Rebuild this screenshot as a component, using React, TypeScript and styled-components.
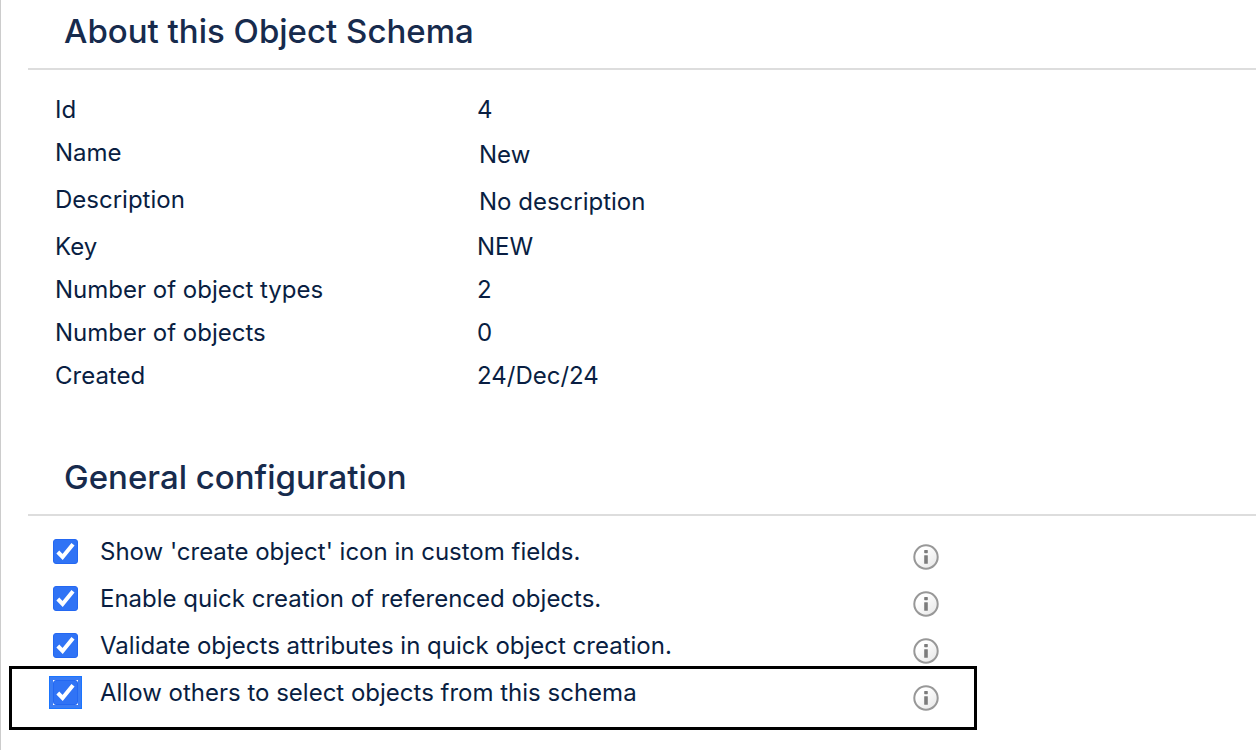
import React from "react";
import styled, { createGlobalStyle } from "styled-components";

const GlobalStyle = createGlobalStyle`
  * { box-sizing: border-box; }
  body {
    margin: 0;
    background: #fff;
    color: #091e42;
    font-family: Inter, "Liberation Sans", sans-serif;
    font-size: 24px;
    font-optical-sizing: none;
    line-height: 29px;
  }
`;

const Page = styled.main`
  min-height: 100vh;
  padding-left: 27px;
  border-left: 1px solid #ccc;
  overflow: hidden;
`;

const Section = styled.section`
  & + & { margin-top: 49px; }
`;

const Heading = styled.h2`
  margin: 0;
  padding: 10px 36px 16px;
  border-bottom: 2px solid #ddd;
  color: #172b4d;
  font-size: 33px;
  font-weight: 500;
  line-height: 42px;
`;

const Details = styled.table`
  margin: 18px 27px 0;
  border-collapse: separate;
  border-spacing: 0;
  text-align: left;
`;

const Term = styled.th`
  width: 422px;
  padding: 7px 0;
  font-weight: 400;
  vertical-align: top;
`;

const Value = styled.td<{ $editable?: boolean }>`
  padding: 7px 0;
  border: ${(p) => (p.$editable ? 2 : 0)}px solid transparent;
  vertical-align: top;
`;

const Options = styled.ul`
  margin: 0;
  padding: 12px 25px 0;
  list-style: none;
`;

const Option = styled.li<{ $marked?: boolean }>`
  position: relative;
  display: flex;
  align-items: center;
  max-width: 886px;
  height: 47px;
  ${(p) =>
    p.$marked &&
    `&::after {
      content: "";
      position: absolute;
      inset: -3px -38px -14px -44px;
      border: 3px solid #000;
      pointer-events: none;
    }`}
`;

const OptionLabel = styled.label`
  display: flex;
  flex: 1;
  align-items: center;
  gap: 22px;
`;

const CheckFrame = styled.span<{ $focused?: boolean }>`
  display: grid;
  width: 25px;
  height: 25px;
  ${(p) => p.$focused && "outline: 3px solid #3a7cf4; box-shadow: 0 0 0 4px #1a75ff;"}

  & > * { grid-area: 1 / 1; }
`;

const CheckInput = styled.input`
  appearance: none;
  width: 25px;
  height: 25px;
  margin: 0;
  border: 1px solid #8993a4;
  border-radius: 3px;
  background: #fff;
  outline: none;

  &:checked {
    border-color: #2468f2;
    background: #3073f5;
  }
  & + svg { visibility: hidden; pointer-events: none; }
  &:checked + svg { visibility: visible; }
`;

const InfoButton = styled.button`
  display: flex;
  align-self: flex-end;
  margin: 0;
  padding: 0 0 5px;
  border: 0;
  background: none;
`;

const details = [
  { term: "Id", value: "4" },
  { term: "Name", value: "New", editable: true },
  { term: "Description", value: "No description", editable: true },
  { term: "Key", value: "NEW" },
  { term: "Number of object types", value: "2" },
  { term: "Number of objects", value: "0" },
  { term: "Created", value: "24/Dec/24" },
];

const options = [
  { id: "create-icon", text: "Show 'create object' icon in custom fields." },
  { id: "quick-create", text: "Enable quick creation of referenced objects." },
  { id: "validate", text: "Validate objects attributes in quick object creation." },
  { id: "allow-select", text: "Allow others to select objects from this schema", marked: true },
];

function InfoIcon() {
  return (
    <svg width="26" height="26" viewBox="0 0 26 26" aria-hidden="true">
      <defs>
        <linearGradient id="info-fill" x1="0" y1="0" x2="1" y2="1">
          <stop offset="0.3" stopColor="#fff" />
          <stop offset="1" stopColor="#e4e4e4" />
        </linearGradient>
      </defs>
      <circle cx="13" cy="13" r="11.7" fill="url(#info-fill)" stroke="#989898" strokeWidth="2" />
      <rect x="11.2" y="6" width="3.6" height="3.2" rx="0.6" fill="#7c7c7c" />
      <rect x="11.2" y="11.2" width="3.6" height="8.6" rx="0.4" fill="#7c7c7c" />
    </svg>
  );
}

export default function App() {
  return (
    <>
      <GlobalStyle />
      <Page>
        <Section>
          <Heading>About this Object Schema</Heading>
          <Details>
            <tbody>
              {details.map((d) => (
                <tr key={d.term}>
                  <Term scope="row">{d.term}</Term>
                  <Value $editable={d.editable}>{d.value}</Value>
                </tr>
              ))}
            </tbody>
          </Details>
        </Section>
        <Section>
          <Heading>General configuration</Heading>
          <Options>
            {options.map((o) => (
              <Option key={o.id} $marked={o.marked}>
                <OptionLabel htmlFor={o.id}>
                  <CheckFrame $focused={o.marked}>
                    <CheckInput id={o.id} type="checkbox" defaultChecked />
                    <svg width="25" height="25" viewBox="0 0 25 25" aria-hidden="true">
                      <path d="M4.8 13 L9.6 18 L20 5.2" fill="none" stroke="#fff" strokeWidth="4" />
                    </svg>
                  </CheckFrame>
                  {o.text}
                </OptionLabel>
                <InfoButton type="button" aria-label="More information">
                  <InfoIcon />
                </InfoButton>
              </Option>
            ))}
          </Options>
        </Section>
      </Page>
    </>
  );
}
